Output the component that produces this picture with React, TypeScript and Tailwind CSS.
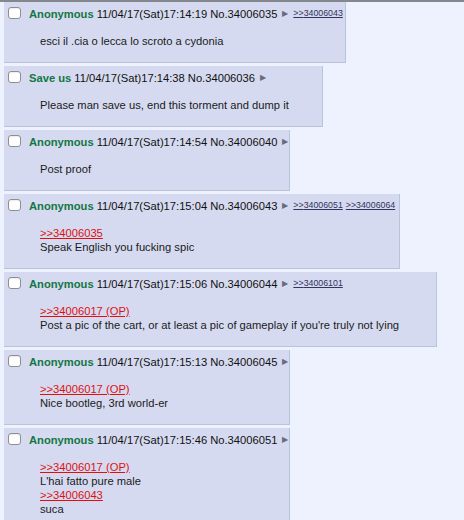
import React from "react";

type Line = { text: string; quote?: boolean };

type Reply = {
    name: string;
    time: string;
    no: string;
    backlinks: string[];
    lines: Line[];
    width: string;
};

const replies: Reply[] = [
    {
        name: "Anonymous",
        time: "11/04/17(Sat)17:14:19",
        no: "34006035",
        backlinks: ["34006043"],
        lines: [{ text: "esci il .cia o lecca lo scroto a cydonia" }],
        width: "w-[342px]",
    },
    {
        name: "Save us",
        time: "11/04/17(Sat)17:14:38",
        no: "34006036",
        backlinks: [],
        lines: [{ text: "Please man save us, end this torment and dump it" }],
        width: "w-[319px]",
    },
    {
        name: "Anonymous",
        time: "11/04/17(Sat)17:14:54",
        no: "34006040",
        backlinks: [],
        lines: [{ text: "Post proof" }],
        width: "w-[286px]",
    },
    {
        name: "Anonymous",
        time: "11/04/17(Sat)17:15:04",
        no: "34006043",
        backlinks: ["34006051", "34006064"],
        lines: [
            { text: ">>34006035", quote: true },
            { text: "Speak English you fucking spic" },
        ],
        width: "w-[396px]",
    },
    {
        name: "Anonymous",
        time: "11/04/17(Sat)17:15:06",
        no: "34006044",
        backlinks: ["34006101"],
        lines: [
            { text: ">>34006017 (OP)", quote: true },
            { text: "Post a pic of the cart, or at least a pic of gameplay if you're truly not lying" },
        ],
        width: "w-[433px]",
    },
    {
        name: "Anonymous",
        time: "11/04/17(Sat)17:15:13",
        no: "34006045",
        backlinks: [],
        lines: [
            { text: ">>34006017 (OP)", quote: true },
            { text: "Nice bootleg, 3rd world-er" },
        ],
        width: "w-[286px]",
    },
    {
        name: "Anonymous",
        time: "11/04/17(Sat)17:15:46",
        no: "34006051",
        backlinks: [],
        lines: [
            { text: ">>34006017 (OP)", quote: true },
            { text: "L'hai fatto pure male" },
            { text: ">>34006043", quote: true },
            { text: "suca" },
        ],
        width: "w-[286px]",
    },
];

function ReplyPost({ post }: { post: Reply }) {
    return (
        <div
            className={`${post.width} ml-[4px] mb-[3px] border-r border-b border-[#b7c5d9] bg-[#d6daf0] pt-[4px]`}
        >
            <div className="flex h-[16px] items-center whitespace-nowrap pl-[4px] text-[11.2px] text-[#111]">
                <span className="-mt-[3px] mr-[8px] inline-block h-[12px] w-[13px] shrink-0 rounded-[3px] border border-[#8e8e8e] bg-white shadow-[inset_0_1px_1px_rgba(0,0,0,0.08)]" />
                <span className="shrink-0 font-bold text-[#117743]">{post.name}</span>
                <span className="ml-[3px] shrink-0">{post.time}</span>
                <span className="ml-[3px] shrink-0">No.{post.no}</span>
                <span className="ml-[5px] shrink-0 text-[8px] text-[#6b6b80]">▶</span>
                {post.backlinks.map((b, i) => (
                    <span
                        key={b}
                        className={`${i === 0 ? "ml-[5px]" : "ml-[3px]"} shrink-0 text-[8.8px] text-[#34345c] underline`}
                    >
                        &gt;&gt;{b}
                    </span>
                ))}
            </div>
            <div className="mt-[12px] mb-[14px] ml-[36px] mr-[10px] text-[11.2px] leading-[14px] text-[#1a1a1a]">
                {post.lines.map((l, i) =>
                    l.quote ? (
                        <div key={i} className="text-[#dd1111] underline">
                            {l.text}
                        </div>
                    ) : (
                        <div key={i} className="whitespace-nowrap">
                            {l.text}
                        </div>
                    )
                )}
            </div>
        </div>
    );
}

export default function App() {
    return (
        <div
            className="h-[520px] w-[464px] overflow-hidden border-t-2 border-[#85878f] bg-[#eef2ff]"
            style={{ fontFamily: '"Liberation Sans", Arial, sans-serif' }}
        >
            {replies.map((p) => (
                <ReplyPost key={p.no} post={p} />
            ))}
        </div>
    );
}
